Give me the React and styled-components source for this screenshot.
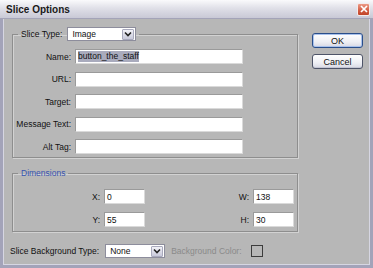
import React from "react";
import styled, { createGlobalStyle } from "styled-components";

const GlobalStyle = createGlobalStyle`
  html, body {
    margin: 0;
    padding: 0;
    background: #b7b7b7;
  }
  * {
    box-sizing: border-box;
  }
`;

const Window = styled.div`
  width: 373px;
  height: 268px;
  display: flex;
  flex-direction: column;
  font-family: "Liberation Sans", Arial, sans-serif;
  font-size: 8.5px;
  color: #111;
`;

const TitleBar = styled.div`
  height: 19px;
  flex-shrink: 0;
  display: flex;
  align-items: center;
  justify-content: space-between;
  padding: 0 3px 0 6px;
  background: linear-gradient(#fafafc, #e0e0e8 45%, #c9c9d6);
  border-bottom: 1px solid #a4a4b8;
`;

const Title = styled.span`
  font-size: 10px;
  font-weight: bold;
  color: #1a1a1a;
`;

const CloseButton = styled.div`
  width: 13px;
  height: 13px;
  border: 1px solid #f4eaea;
  border-radius: 2px;
  background: linear-gradient(#ec9a86, #d25a40 60%, #c04428);
  display: flex;
  align-items: center;
  justify-content: center;
`;

const Body = styled.div`
  flex: 1;
  display: flex;
  align-items: flex-start;
  border: 3px solid #a3a3b9;
  border-top: none;
  box-shadow: inset 1px 0 #d6d6e2, inset -1px -1px #d6d6e2;
  padding: 8px 0 0 7px;
`;

const Main = styled.div`
  width: 288px;
  display: flex;
  flex-direction: column;
`;

const Group = styled.fieldset`
  margin: ${(p) => p.$top || 0}px 0 0 2px;
  width: 286px;
  padding: ${(p) => p.$pad};
  border: 1px solid #8e8e8e;
  box-shadow: inset 1px 1px #d2d2d2, 1px 1px #d2d2d2;
  min-width: 0;
`;

const Legend = styled.legend`
  margin-left: 5px;
  padding: 0 3px;
  display: flex;
  align-items: center;
  gap: 5px;
  line-height: 11px;
  color: ${(p) => p.$color || "#111"};
`;

const Combo = styled.div`
  width: ${(p) => p.$width}px;
  height: 14px;
  background: #fff;
  border: 1px solid #8d8d9c;
  display: flex;
  align-items: center;
  justify-content: space-between;
  padding: 0 1px 0 4px;
`;

const ArrowBox = styled.div`
  width: 12px;
  height: 11px;
  border: 1px solid #a9aabd;
  border-radius: 1px;
  background: linear-gradient(#f2f2f8, #c8c9da);
  display: flex;
  align-items: center;
  justify-content: center;
`;

const FieldGrid = styled.div`
  display: grid;
  grid-template-columns: 58px 168px;
  column-gap: 4px;
  row-gap: 7.5px;
  align-items: center;
`;

const DimGrid = styled.div`
  display: grid;
  grid-template-columns: 87px 41px 100px 41px;
  column-gap: 4px;
  row-gap: 8px;
  align-items: center;
`;

const Label = styled.span`
  text-align: right;
  white-space: nowrap;
  color: ${(p) => (p.$disabled ? "#8a8a8a" : "#111")};
`;

const TextBox = styled.div`
  height: 15px;
  background: #fff;
  border: 1px solid #a6a6a6;
  border-color: #9a9a9a #dadada #dadada #9a9a9a;
  display: flex;
  align-items: center;
  padding-left: 2px;
  white-space: nowrap;
`;

const Selected = styled.span`
  background: #a9abbd;
  color: #111;
  line-height: 11px;
`;

const BottomRow = styled.div`
  margin-top: 12px;
  display: flex;
  align-items: center;
  gap: 6px;
`;

const Swatch = styled.div`
  width: 12px;
  height: 12px;
  border: 1px solid #3c3c3c;
  margin-left: 3px;
`;

const Buttons = styled.div`
  margin: 6px 0 0 14px;
  display: flex;
  flex-direction: column;
  gap: 6px;
`;

const Button = styled.div`
  width: 51px;
  height: 15px;
  border-radius: 3px;
  border: 1px solid ${(p) => (p.$default ? "#2a4e8a" : "#4e5468")};
  box-shadow: ${(p) =>
    p.$default ? "inset 0 0 0 1px #a9c2ec" : "inset 0 -1px #c4c6d4"};
  background: linear-gradient(#ffffff, #eeeff4 60%, #d8d9e4);
  display: flex;
  align-items: center;
  justify-content: center;
  font-size: 9px;
`;

const Chevron = () => (
  <svg width="8" height="6" viewBox="0 0 8 6">
    <path d="M1 1.5 L4 4.5 L7 1.5" fill="none" stroke="#222" strokeWidth="1.6" />
  </svg>
);

const CloseX = () => (
  <svg width="8" height="8" viewBox="0 0 8 8">
    <path d="M1 1 L7 7 M7 1 L1 7" stroke="#fff" strokeWidth="1.7" />
  </svg>
);

const Dropdown = ({ width, value }) => (
  <Combo $width={width}>
    <span>{value}</span>
    <ArrowBox>
      <Chevron />
    </ArrowBox>
  </Combo>
);

const fields = [
  { label: "Name:", value: "button_the_staff", selected: true },
  { label: "URL:", value: "" },
  { label: "Target:", value: "" },
  { label: "Message Text:", value: "" },
  { label: "Alt Tag:", value: "" },
];

const App = () => {
  return (
    <>
      <GlobalStyle />
      <Window>
        <TitleBar>
          <Title>Slice Options</Title>
          <CloseButton>
            <CloseX />
          </CloseButton>
        </TitleBar>
        <Body>
          <Main>
            <Group $pad="8px 0 3px 0">
              <Legend>
                Slice Type:
                <Dropdown width={69} value="Image" />
              </Legend>
              <FieldGrid>
                {fields.map((f) => (
                  <React.Fragment key={f.label}>
                    <Label>{f.label}</Label>
                    <TextBox>
                      {f.selected ? <Selected>{f.value}</Selected> : f.value}
                    </TextBox>
                  </React.Fragment>
                ))}
              </FieldGrid>
            </Group>
            <Group $top={10} $pad="10px 0 4px 0">
              <Legend $color="#3552b0">Dimensions</Legend>
              <DimGrid>
                <Label>X:</Label>
                <TextBox>0</TextBox>
                <Label>W:</Label>
                <TextBox>138</TextBox>
                <Label>Y:</Label>
                <TextBox>55</TextBox>
                <Label>H:</Label>
                <TextBox>30</TextBox>
              </DimGrid>
            </Group>
            <BottomRow>
              <Label>Slice Background Type:</Label>
              <Dropdown width={60} value="None" />
              <Label $disabled>Background Color:</Label>
              <Swatch />
            </BottomRow>
          </Main>
          <Buttons>
            <Button $default>OK</Button>
            <Button>Cancel</Button>
          </Buttons>
        </Body>
      </Window>
    </>
  );
};

export default App;
